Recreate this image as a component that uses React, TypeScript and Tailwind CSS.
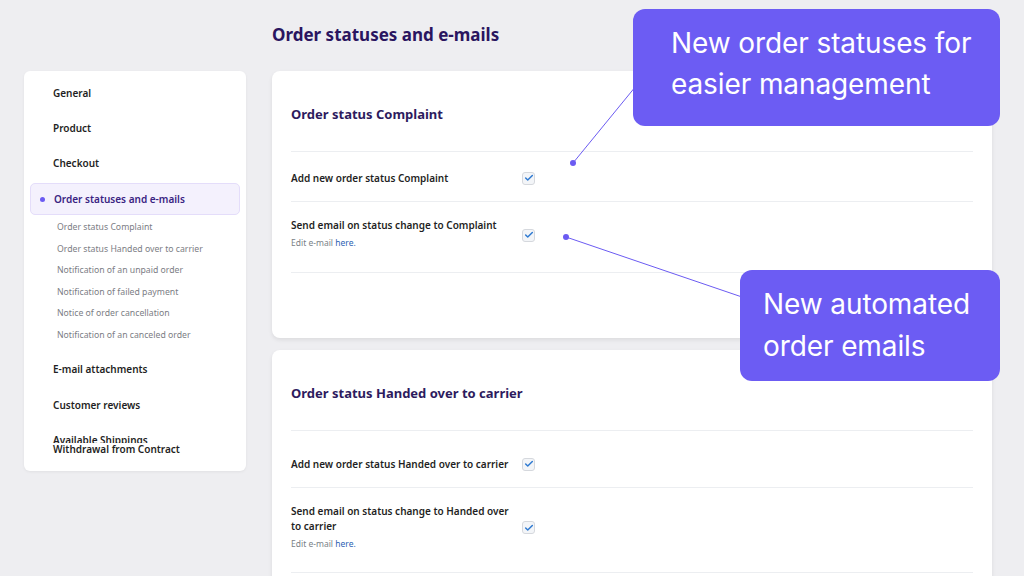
import { Check } from 'lucide-react';

const subItems = [
    'Order status Complaint',
    'Order status Handed over to carrier',
    'Notification of an unpaid order',
    'Notification of failed payment',
    'Notice of order cancellation',
    'Notification of an canceled order',
];

function Checkbox() {
    return (
        <div className="flex h-[13px] w-[13px] items-center justify-center rounded-[3px] border border-[#d5d8dd] bg-[#f3f5f8]">
            <Check size={10} strokeWidth={3.5} className="text-[#2f7ad1]" />
        </div>
    );
}

function NavItem({ label }: { label: string }) {
    return (
        <div className="flex h-[35px] items-center pl-[29px] text-[10px] font-semibold text-[#1f1f24]">
            {label}
        </div>
    );
}

function EditLink() {
    return (
        <div className="mt-[3px] text-[8.5px] leading-[13px] text-[#7a7f87]">
            Edit e-mail <span className="text-[#2c5fb3]">here.</span>
        </div>
    );
}

export default function App() {
    return (
        <div className="relative h-[576px] w-[1024px] overflow-hidden bg-[#eeeef1] font-['Noto_Sans',sans-serif]">
            <div className="flex gap-[26px] pl-[24px]">
                {/* sidebar */}
                <aside className="mt-[71px] flex h-[400px] w-[222px] flex-col rounded-[6px] bg-white shadow-[0_1px_3px_rgba(0,0,0,0.06)]">
                    <div className="h-[372px] overflow-hidden pt-[5px]">
                        <NavItem label="General" />
                        <NavItem label="Product" />
                        <NavItem label="Checkout" />
                        <div className="mx-[6px] mt-[2px] flex h-[32px] items-center rounded-[5px] border border-[#e4ddfa] bg-[#f4f1fd] pl-[9px] text-[10px] font-semibold text-[#3a2482]">
                            <span className="mr-[9px] h-[5px] w-[5px] rounded-full bg-[#6b5bf2]" />
                            Order statuses and e-mails
                        </div>
                        <div className="mt-[2px]">
                            {subItems.map((s) => (
                                <div key={s} className="flex h-[21.5px] items-center pl-[33px] text-[8.7px] text-[#7b7d84]">
                                    {s}
                                </div>
                            ))}
                        </div>
                        <div className="mt-[6px]">
                            <NavItem label="E-mail attachments" />
                            <div className="h-[1px]" />
                            <NavItem label="Customer reviews" />
                            <NavItem label="Available Shippings" />
                        </div>
                    </div>
                    <div className="pl-[29px] text-[10px] font-semibold leading-[12px] text-[#1f1f24]">
                        Withdrawal from Contract
                    </div>
                </aside>

                {/* main */}
                <main className="flex w-[720px] flex-col">
                    <h1 className="mt-[24px] h-[22px] text-[17px] font-bold leading-[22px] text-[#2a1560]">
                        Order statuses and e-mails
                    </h1>
                    <section className="mt-[25px] h-[267px] rounded-[8px] bg-white px-[19px] shadow-[0_2px_4px_rgba(0,0,0,0.08)]">
                        <h2 className="pt-[33px] text-[13px] font-bold leading-[20px] text-[#2d1b5e]">
                            Order status Complaint
                        </h2>
                        <div className="mt-[27px] border-t border-[#eceef1]" />
                        <div className="flex items-center pt-[18.5px] pb-[15.5px]">
                            <div className="w-[231px] text-[10px] font-semibold leading-[15px] text-[#1f1f24]">
                                Add new order status Complaint
                            </div>
                            <Checkbox />
                        </div>
                        <div className="border-t border-[#eceef1]" />
                        <div className="flex items-center pt-[15.5px] pb-[23px]">
                            <div className="w-[231px]">
                                <div className="text-[10px] font-semibold leading-[15px] text-[#1f1f24]">
                                    Send email on status change to Complaint
                                </div>
                                <EditLink />
                            </div>
                            <div className="mt-[4px]">
                                <Checkbox />
                            </div>
                        </div>
                        <div className="border-t border-[#eceef1]" />
                    </section>

                    <section className="mt-[12px] h-[260px] rounded-[8px] bg-white px-[19px] shadow-[0_2px_4px_rgba(0,0,0,0.08)]">
                        <h2 className="pt-[33px] text-[13px] font-bold leading-[20px] text-[#2d1b5e]">
                            Order status Handed over to carrier
                        </h2>
                        <div className="mt-[27px] border-t border-[#eceef1]" />
                        <div className="flex items-center pt-[25.5px] pb-[15.5px]">
                            <div className="w-[231px] text-[10px] font-semibold leading-[15px] text-[#1f1f24]">
                                Add new order status Handed over to carrier
                            </div>
                            <Checkbox />
                        </div>
                        <div className="border-t border-[#eceef1]" />
                        <div className="flex items-center pt-[15.5px] pb-[22px]">
                            <div className="w-[231px]">
                                <div className="w-[226px] text-[10px] font-semibold leading-[15px] text-[#1f1f24]">
                                    Send email on status change to Handed over to carrier
                                </div>
                                <EditLink />
                            </div>
                            <div className="mt-[2px]">
                                <Checkbox />
                            </div>
                        </div>
                        <div className="border-t border-[#eceef1]" />
                    </section>
                </main>
            </div>

            {/* callout connectors */}
            <svg className="pointer-events-none absolute inset-0" width="1024" height="576">
                <line x1="573" y1="163" x2="636" y2="86" stroke="#6b5bf2" strokeWidth="1" />
                <circle cx="573" cy="163" r="3" fill="#6b5bf2" />
                <line x1="566" y1="237" x2="742" y2="297" stroke="#6b5bf2" strokeWidth="1" />
                <circle cx="566" cy="237" r="3" fill="#6b5bf2" />
            </svg>

            {/* callouts */}
            <div className="absolute left-[633px] top-[9px] h-[117px] w-[367px] rounded-[12px] bg-[#6c5cf3] pl-[38px] pt-[14px] font-['Inter',sans-serif] text-[28px] leading-[41px] tracking-[-0.1px] text-white">
                New order statuses for
                <br />
                easier management
            </div>
            <div className="absolute left-[740px] top-[270px] h-[111px] w-[260px] rounded-[12px] bg-[#6c5cf3] pl-[23px] pt-[13px] font-['Inter',sans-serif] text-[28px] leading-[42px] tracking-[-0.1px] text-white">
                New automated
                <br />
                order emails
            </div>
        </div>
    );
}
